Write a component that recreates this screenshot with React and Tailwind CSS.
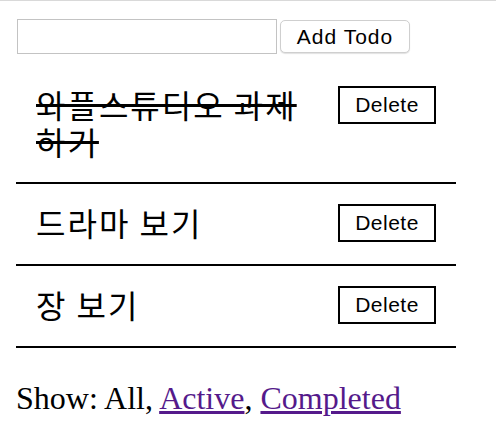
import { useState } from "react";

const initialTodos = [
  { id: 1, text: "와플스튜디오 과제 하기", completed: true },
  { id: 2, text: "드라마 보기", completed: false },
  { id: 3, text: "장 보기", completed: false },
];

function TodoItem({ todo, onDelete }) {
  return (
    <li className="flex items-start gap-5 border-b-2 border-black pl-5 pr-5 pt-5 pb-[22px]">
      <span
        className={
          "flex-1 break-keep text-[32px] leading-[37px] tracking-[2px] text-black " +
          (todo.completed ? "line-through" : "")
        }
        style={{ fontFamily: '"Noto Sans CJK KR", "Noto Sans", sans-serif' }}
      >
        {todo.text}
      </span>
      <button
        onClick={() => onDelete(todo.id)}
        className="flex h-[38px] w-[98px] flex-none items-center justify-center border-2 border-black bg-white text-[21px] tracking-[0.5px] text-black"
        style={{ fontFamily: '"Liberation Sans", Arial, sans-serif' }}
      >
        Delete
      </button>
    </li>
  );
}

export default function App() {
  const [todos, setTodos] = useState(initialTodos);
  const [value, setValue] = useState("");

  const addTodo = (e) => {
    e.preventDefault();
    if (!value.trim()) return;
    setTodos([...todos, { id: Date.now(), text: value, completed: false }]);
    setValue("");
  };

  return (
    <div
      className="min-h-screen border-t border-[#d9d9d9] bg-white text-black"
      style={{ fontFamily: '"Liberation Serif", "Times New Roman", serif' }}
    >
      <form onSubmit={addTodo} className="ml-[17px] mt-[18px] flex items-center">
        <input
          value={value}
          onChange={(e) => setValue(e.target.value)}
          className="h-[35px] w-[260px] border border-[#c3c3c3] bg-white px-1 outline-none"
        />
        <button
          type="submit"
          className="ml-[3px] flex h-[33px] w-[130px] items-center justify-center rounded-[5px] border border-[#cfcfcf] bg-white text-[21px] tracking-[1px] text-black shadow-[0_1px_1px_rgba(0,0,0,0.12)]"
          style={{ fontFamily: '"Liberation Sans", Arial, sans-serif' }}
        >
          Add Todo
        </button>
      </form>

      <ul className="mx-4 mt-[12px] w-[440px]">
        {todos.map((todo) => (
          <TodoItem
            key={todo.id}
            todo={todo}
            onDelete={(id) => setTodos(todos.filter((t) => t.id !== id))}
          />
        ))}
      </ul>

      <p className="ml-4 mt-8 text-[32px] leading-[37px]">
        Show: All,{" "}
        <a href="#" className="text-[#551a8b] underline">
          Active
        </a>
        ,{" "}
        <a href="#" className="text-[#551a8b] underline">
          Completed
        </a>
      </p>
    </div>
  );
}
